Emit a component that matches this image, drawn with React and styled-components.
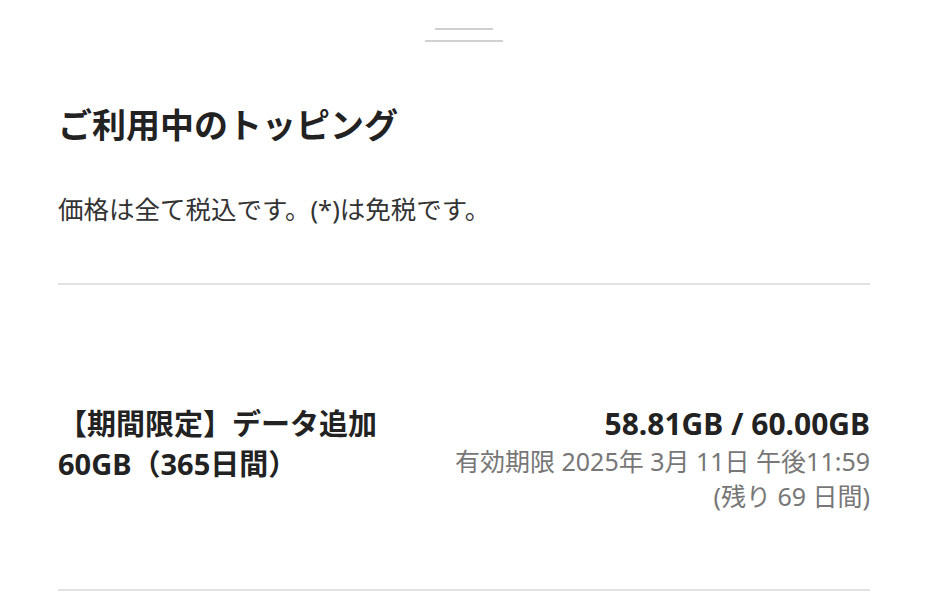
import styled, { createGlobalStyle } from "styled-components";

const GlobalStyle = createGlobalStyle`
  html, body {
    margin: 0;
    padding: 0;
    background: #fff;
  }
  body {
    font-family: "Noto Sans", "Noto Sans CJK JP", sans-serif;
    color: #222;
  }
`;

const toppings = [
  {
    name: "【期間限定】データ追加60GB（365日間）",
    usage: "58.81GB / 60.00GB",
    expires: "有効期限 2025年 3月 11日 午後11:59",
    remaining: "(残り 69 日間)",
  },
];

const App = () => {
  return (
    <>
      <GlobalStyle />
      <Sheet>
        <Handle>
          <HandleBar $width={58} />
          <HandleBar $width={78} />
        </Handle>
        <Title>ご利用中のトッピング</Title>
        <Note>価格は全て税込です。(*)は免税です。</Note>
        <Divider />
        {toppings.map((t) => (
          <Item key={t.name}>
            <ItemName>{t.name}</ItemName>
            <ItemInfo>
              <Usage>{t.usage}</Usage>
              <Meta>{t.expires}</Meta>
              <Meta>{t.remaining}</Meta>
            </ItemInfo>
          </Item>
        ))}
      </Sheet>
    </>
  );
};

export default App;

const Sheet = styled.div`
  padding: 0 58px;
  display: flex;
  flex-direction: column;
`;

const Handle = styled.div`
  padding-top: 28px;
  display: flex;
  flex-direction: column;
  align-items: center;
  gap: 10px;
`;

const HandleBar = styled.div`
  width: ${(p) => p.$width}px;
  height: 2px;
  background-color: #cfcfd4;
`;

const Title = styled.h1`
  margin: 60px 0 0;
  font-size: 34px;
  line-height: 46px;
  font-weight: 700;
  color: #222;
`;

const Note = styled.p`
  margin: 44px 0 0;
  font-size: 25.5px;
  line-height: 34px;
  color: #333;
`;

const Divider = styled.div`
  margin-top: 57px;
  height: 2px;
  background-color: #e2e2e6;
`;

const Item = styled.div`
  display: flex;
  justify-content: space-between;
  align-items: flex-start;
  padding: 119px 0 75px;
  border-bottom: 2px solid #e2e2e6;
`;

const ItemName = styled.div`
  max-width: 332px;
  font-size: 29px;
  line-height: 40px;
  font-weight: 700;
  color: #222;
`;

const ItemInfo = styled.div`
  text-align: right;
  display: flex;
  flex-direction: column;
`;

const Usage = styled.div`
  font-size: 30px;
  line-height: 40px;
  font-weight: 700;
  color: #222;
`;

const Meta = styled.div`
  font-size: 25px;
  line-height: 35px;
  color: #777;
`;
